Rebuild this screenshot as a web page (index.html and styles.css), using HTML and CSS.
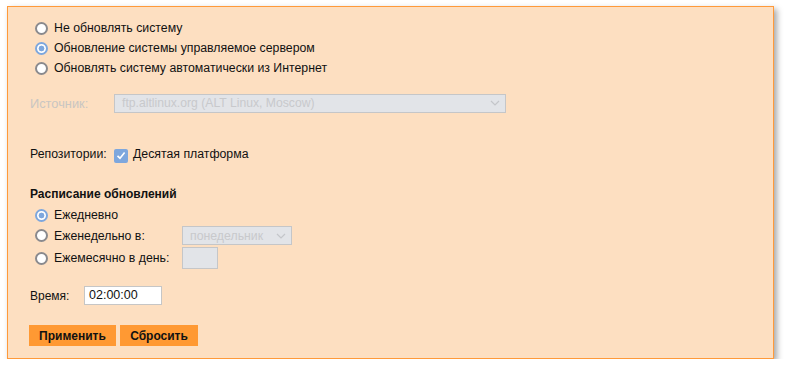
FILE: index.html
```html
<!DOCTYPE html>
<html>
<head>
<meta charset="utf-8">
<link rel="stylesheet" href="styles.css">
</head>
<body>
<div class="panel">
  <div class="radios top">
    <div class="radio-row"><span class="radio"></span><span class="rlabel">Не обновлять систему</span></div>
    <div class="radio-row"><span class="radio on"></span><span class="rlabel">Обновление системы управляемое сервером</span></div>
    <div class="radio-row"><span class="radio"></span><span class="rlabel">Обновлять систему автоматически из Интернет</span></div>
  </div>
  <div class="field source">
    <span class="flabel dim">Источник:</span>
    <div class="select wide"><span>ftp.altlinux.org (ALT Linux, Moscow)</span><svg class="chev" width="10" height="6" viewBox="0 0 10 6"><path d="M1 1 L5 5 L9 1" fill="none" stroke="#c4c6ca" stroke-width="1.2"/></svg></div>
  </div>
  <div class="field repo">
    <span class="flabel">Репозитории:</span>
    <span class="check"><svg width="10" height="9" viewBox="0 0 10 9"><path d="M1.5 4.8 L4 7.2 L8.6 1.6" fill="none" stroke="#fff" stroke-width="1.6"/></svg></span>
    <span class="clabel">Десятая платформа</span>
  </div>
  <div class="sched-title">Расписание обновлений</div>
  <div class="radios sched">
    <div class="radio-row"><span class="radio on"></span><span class="rlabel">Ежедневно</span></div>
    <div class="radio-row"><span class="radio"></span><span class="rlabel w">Еженедельно в:</span><div class="select small"><span>понедельник</span><svg class="chev" width="10" height="6" viewBox="0 0 10 6"><path d="M1 1 L5 5 L9 1" fill="none" stroke="#c4c6ca" stroke-width="1.2"/></svg></div></div>
    <div class="radio-row"><span class="radio"></span><span class="rlabel w">Ежемесячно в день:</span><div class="daybox"></div></div>
  </div>
  <div class="field time">
    <span class="flabel tl">Время:</span>
    <div class="tinput">02:00:00</div>
  </div>
  <div class="buttons">
    <button class="btn b1">Применить</button>
    <button class="btn b2">Сбросить</button>
  </div>
</div>
</body>
</html>
```
FILE: styles.css
```css
html, body { margin: 0; padding: 0; background: #fff; }
body { font-family: "Liberation Sans", Arial, sans-serif; font-size: 12.3px; color: #111; }
.panel {
  box-sizing: border-box;
  margin: 6px 0 0 7px;
  width: 767px;
  height: 353px;
  background: #fddfc1;
  border: 1px solid #ff9a3a;
  box-shadow: 3px 3px 6px rgba(0,0,0,0.35);
  padding: 11px 0 0 22px;
}
.radios { display: flex; flex-direction: column; }
.radio-row { display: flex; align-items: center; height: 20px; }
.radio {
  box-sizing: border-box;
  width: 13px; height: 13px; border-radius: 50%;
  border: 2px solid #8a8a8e; background: #fff;
  margin: 0 6px 0 5px; flex: none;
}
.radio.on { border: 2px solid #7ea7dd; background: radial-gradient(circle, #7ea7dd 0 2.6px, #fff 3.2px); }
.rlabel { font-size: 12.3px; color: #111; }
.field { display: flex; align-items: center; }
.flabel { width: 84px; flex: none; }
.dim { color: #c9c6c2; font-size: 12.8px; }
.source { margin-top: 16px; height: 18px; }
.select {
  box-sizing: border-box; height: 19px;
  display: flex; align-items: center; justify-content: space-between;
  background: #e2e4e8; border: 1px solid #c5c6c8; color: #c8c9cc;
  padding: 0 5px 0 7px;
}
.select.wide { width: 392px; font-size: 12.2px; }
.select.small { width: 110px; font-size: 12.3px; padding-left: 7px; }
.chev { flex: none; }
.repo { margin-top: 34px; height: 16px; }
.check {
  width: 14px; height: 14px; border-radius: 2px; background: #7ea7dd;
  display: flex; align-items: center; justify-content: center; margin-top: 3px; flex: none;
}
.clabel { margin-left: 5px; }
.sched-title { margin-top: 24px; font-weight: bold; font-size: 12px; line-height: 16px; }
.sched { margin-top: 3px; }
.sched .radio-row:nth-child(1) { height: 20px; }
.sched .radio-row:nth-child(2) { height: 21px; }
.sched .radio-row:nth-child(3) { height: 24px; }
.rlabel.w { width: 128px; }
.daybox { box-sizing: border-box; width: 36px; height: 22px; background: #e2e4e8; border: 1px solid #c5c6c8; }
.time { margin-top: 16px; height: 19px; }
.tl { width: 54px; font-size: 12px; }
.tinput {
  box-sizing: border-box; width: 78px; height: 19px; background: #fff;
  border: 1px solid #c6c6c6; padding-left: 4px; line-height: 17px; font-size: 12.5px;
}
.buttons { display: flex; gap: 4px; margin-top: 20px; margin-left: -1px; }
.btn {
  font-family: "Liberation Sans", Arial, sans-serif; font-weight: bold; font-size: 12px;
  background: #ff9933; border: none; color: #111; height: 21px; padding: 0; margin: 0;
}
.b1 { width: 87px; }
.b2 { width: 78px; }
```
